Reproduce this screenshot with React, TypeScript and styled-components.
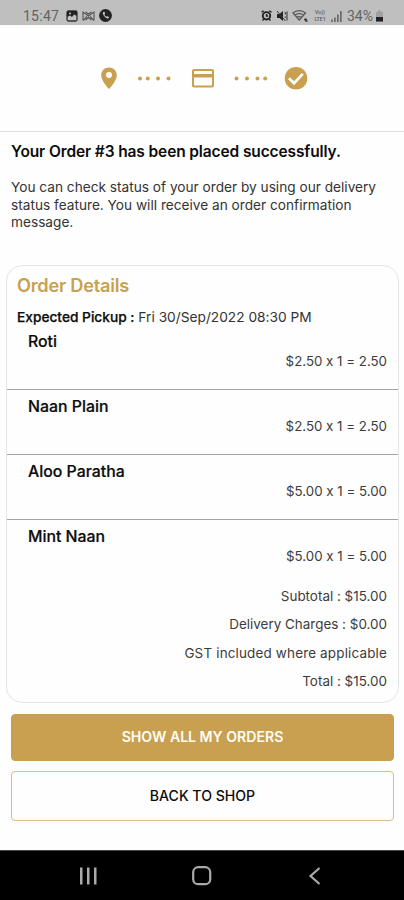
import React from 'react';
import styled, { createGlobalStyle } from 'styled-components';

const GOLD = '#c9a050';

const GlobalStyle = createGlobalStyle`
  * { box-sizing: border-box; }
  body { margin: 0; background: #fefefe; }
  button { font-family: inherit; }
`;

const Screen = styled.div`
  width: 404px;
  height: 900px;
  display: flex;
  flex-direction: column;
  overflow: hidden;
  background: #fefefe;
  color: #0c0c0c;
  font-family: Inter, "Liberation Sans", sans-serif;
  font-feature-settings: "calt" 0;
`;

const StatusBar = styled.header`
  height: 25px;
  flex: none;
  display: flex;
  align-items: center;
  justify-content: space-between;
  padding: 6px 20px 0 23px;
  background: #bfbfbf;
  color: #636363;
  font: 400 14px/18px Roboto, sans-serif;
`;

const StatusGroup = styled.div`
  display: flex;
  align-items: center;
  gap: 4px;
`;

const Clock = styled.span`
  margin-right: 3px;
  letter-spacing: 0.25px;
`;

const Percent = styled.span`
  margin: 0 -2px 0 1px;
`;

const Steps = styled.nav`
  height: 107px;
  flex: none;
  display: flex;
  align-items: flex-start;
  padding: 41px 0 0 101px;
  border-bottom: 1.5px solid #dfdfdf;

  svg { flex: none; display: block; }
`;

const StepLink = styled.span<{ $before: number; $after: number }>`
  display: flex;
  margin: 0 ${(p) => p.$after}px 0 ${(p) => p.$before}px;
`;

const Message = styled.section`
  height: 133px;
  flex: none;
  padding: 10px 11px 0;
`;

const Title = styled.h1`
  margin: 0 0 17px;
  font-size: 15.5px;
  line-height: 20px;
  font-weight: 600;
  letter-spacing: -0.12px;
  white-space: nowrap;
`;

const Copy = styled.p`
  margin: 0;
  color: #333;
  font-size: 13.66px;
  line-height: 17.7px;
`;

const Card = styled.section`
  height: 438px;
  flex: none;
  margin: 0 5px 0 6px;
  border: 1px solid #e6e6e6;
  border-radius: 16px;
  padding-top: 8px;
`;

const CardTitle = styled.h2`
  margin: 0 10px 11px;
  color: ${GOLD};
  font-size: 18.2px;
  line-height: 22px;
  font-weight: 600;
  letter-spacing: -0.24px;
`;

const Pickup = styled.p`
  margin: 0 10px 4px;
  height: 20px;
  color: #333;
  font-size: 13.73px;
  line-height: 20px;
  white-space: pre;
`;

const PickupLabel = styled.strong`
  color: #0c0c0c;
  font-weight: 500;
  -webkit-text-stroke: 0.25px #0c0c0c;
`;

const Item = styled.article<{ $last?: boolean }>`
  height: ${(p) => (p.$last ? 51 : 65)}px;
  padding: 7px 11px 0 21px;
  border-bottom: ${(p) => (p.$last ? 'none' : '1px solid #a4a4a4')};

  &:first-of-type {
    height: 59px;
    padding-top: 1px;
  }
`;

const ItemName = styled.h3`
  margin: 0;
  font-size: 15.85px;
  line-height: 20px;
  font-weight: 500;
  -webkit-text-stroke: 0.2px #0c0c0c;
`;

const ItemPrice = styled.p`
  margin: -1px 0 0;
  color: #3c3c3c;
  font-size: 13.3px;
  line-height: 20px;
  text-align: right;
`;

const Totals = styled.div`
  padding: 10.5px 11px 0;
  color: #3c3c3c;
  font-size: 13.45px;
  line-height: 28.5px;
  text-align: right;
`;

const TotalLine = styled.div<{ $wide?: boolean }>`
  letter-spacing: ${(p) => (p.$wide ? 0.17 : 0)}px;
`;

const Actions = styled.div`
  flex: 1;
  display: flex;
  flex-direction: column;
  gap: 10px;
  padding: 11px 10px 0 11px;
`;

const Action = styled.button<{ $filled?: boolean }>`
  width: 100%;
  height: ${(p) => (p.$filled ? 47 : 50)}px;
  padding: 0 0 2px;
  border: 1px solid ${(p) => (p.$filled ? GOLD : '#d9bd80')};
  border-radius: 4px;
  background: ${(p) => (p.$filled ? GOLD : '#fefefe')};
  color: ${(p) => (p.$filled ? '#fffdf5' : '#0c0c0c')};
  font-size: 14.1px;
  font-weight: ${(p) => (p.$filled ? 600 : 500)};
`;

const SystemNav = styled.footer`
  height: 50px;
  flex: none;
  display: grid;
  grid-template-columns: repeat(3, 113px);
  justify-content: center;
  justify-items: center;
  align-items: center;
  background: #000;
  border-top: 1px solid #444;
`;

const Dots = ({ xs }: { xs: number[] }) => (
  <svg width="36" height="24" viewBox="0 0 36 24" fill={GOLD}>
    {xs.map((x) => (
      <circle key={x} cx={x} cy="12.6" r="2" />
    ))}
  </svg>
);

const PinIcon = () => (
  <svg width="16" height="24" viewBox="0 0 16 24" fill={GOLD}>
    <path fillRule="evenodd" d="M8 1.5C3.6 1.5.2 4.9.2 9.2.2 15 8 23 8 23s7.8-8 7.8-13.8C15.8 4.9 12.4 1.5 8 1.5zM8 6a3 3 0 1 1 0 6 3 3 0 0 1 0-6z" />
  </svg>
);

const CardIcon = () => (
  <svg width="24" height="24" viewBox="0 0 24 24" fill={GOLD}>
    <path fillRule="evenodd" d="M3 3h18q2 0 2 2v14.5q0 2-2 2H3q-2 0-2-2V5q0-2 2-2zm0 2v3h18V5zm0 6.5v8h18v-8z" />
  </svg>
);

const CheckIcon = () => (
  <svg width="24" height="24" viewBox="0 0 24 24">
    <circle cx="12" cy="12.2" r="11.3" fill={GOLD} />
    <path d="M5 12.3l5 4.9 8.800-9.400" fill="none" stroke="#fefefe" strokeWidth="2.7" />
  </svg>
);

const PictureIcon = () => (
  <svg width="12" height="12" viewBox="0 0 12 12">
    <rect x="1" y="1" width="10" height="10" rx="1.5" fill="none" stroke="#333" strokeWidth="1.3" />
    <path d="M1 1h10v5L8 4.5 6 7 4 5.500 1 7z" fill="#222" />
    <circle cx="4" cy="3.6" r="1" fill="#bfbfbf" />
  </svg>
);

const MailIcon = () => (
  <svg width="13" height="12" viewBox="0 0 13 12" fill="none" stroke="#555" strokeWidth="1.1">
    <path d="M1 10.500V2l5.500 4L12 2v8.500M1 10.500l4-4M12 10.500l-4-4M3.500 10l3-2.500 3 2.500M3.500 2l3 2 3-2" />
  </svg>
);

const CallIcon = () => (
  <svg width="13" height="13" viewBox="0 0 13 13">
    <circle cx="6.5" cy="6.5" r="6.4" fill="#222" />
    <path d="M4 3.200c-1 1.700 2.800 6.800 5.300 6.200l.8-1.200-1.900-1.300-.9.800C6.300 7.200 5.600 6.200 5.400 5.400l.8-.8-.9-1.900z" fill="#c8c8c8" />
  </svg>
);

const AlarmIcon = () => (
  <svg width="11" height="11" viewBox="0 0 11 11" fill="none" stroke="#222">
    <circle cx="5.5" cy="5.8" r="3.7" strokeWidth="1.9" />
    <path d="M.5 2.300L2.700.7M8.300.7l2.200 1.600M1.500 10.500l1.300-1.300M9.500 10.500L8.200 9.200M5.500 4v2h1.600" strokeWidth="1.4" />
  </svg>
);

const MuteIcon = () => (
  <svg width="12" height="12" viewBox="0 0 12 12">
    <path d="M1 4h2.500L7 1v10L3.500 8H1z" fill="#222" />
    <path d="M1 1l8.500 10M9.300 2v2.500M9.300 6.500V8M11 1.500v9" fill="none" stroke="#333" />
  </svg>
);

const WifiIcon = () => (
  <svg width="17" height="13" viewBox="0 0 17 13" fill="none" stroke="#555" strokeWidth="1.2">
    <path d="M1 4c3.500-3.200 9-3.200 12.500 0L7.300 11zM3 6.200c2.400-2 6.200-2 8.600 0M5 8.500c1.400-1 3.200-1 4.600 0" />
    <path d="M12 10.500h2M13.500 12h2M14 9.500v3" strokeWidth="1.5" stroke="#333" />
  </svg>
);

const VolteLabel = styled.span`
  display: flex;
  flex-direction: column;
  width: 14px;
  color: #5c5c5c;
  font: 500 5.2px/6.5px Roboto, sans-serif;
  text-align: center;
`;

const SignalIcon = () => (
  <svg width="11" height="12" viewBox="0 0 11 12" fill="#6a6a6a">
    <path d="M0 9.500h1.700V12H0zM3 7.500h1.700V12H3zM6 4.500h1.700V12H6zM9 1h1.700v11H9z" />
  </svg>
);

const BatteryIcon = () => (
  <svg width="9" height="12" viewBox="0 0 9 12">
    <path d="M3 .5h3V2h2v9.500H1V2h2z" fill="#a0a0a0" />
    <path d="M1 7h7v4.500H1z" fill="#222" />
  </svg>
);

const items = [
  { name: 'Roti', price: '$2.50 x 1 = 2.50' },
  { name: 'Naan Plain', price: '$2.50 x 1 = 2.50' },
  { name: 'Aloo Paratha', price: '$5.00 x 1 = 5.00' },
  { name: 'Mint Naan', price: '$5.00 x 1 = 5.00' },
];

export default function App() {
  return (
    <Screen>
      <GlobalStyle />
      <StatusBar>
        <StatusGroup>
          <Clock>15:47</Clock>
          <PictureIcon />
          <MailIcon />
          <CallIcon />
        </StatusGroup>
        <StatusGroup>
          <AlarmIcon />
          <MuteIcon />
          <WifiIcon />
          <VolteLabel>
            <span>Vo))</span>
            <span>LTE1</span>
          </VolteLabel>
          <SignalIcon />
          <Percent>34%</Percent>
          <BatteryIcon />
        </StatusGroup>
      </StatusBar>
      <Steps>
        <PinIcon />
        <StepLink $before={18.5} $after={19}>
          <Dots xs={[4, 11.7, 22, 32.5]} />
        </StepLink>
        <CardIcon />
        <StepLink $before={18.5} $after={15}>
          <Dots xs={[3.5, 14, 24.5, 32.2]} />
        </StepLink>
        <CheckIcon />
      </Steps>
      <Message>
        <Title>Your Order #3 has been placed successfully.</Title>
        <Copy>
          You can check status of your order by using our delivery
          <br />
          status feature. You will receive an order confirmation
          <br />
          message.
        </Copy>
      </Message>
      <Card>
        <CardTitle>Order Details</CardTitle>
        <Pickup>
          <PickupLabel>Expected Pickup :</PickupLabel> Fri 30/Sep/2022 08:30 PM
        </Pickup>
        {items.map((item, i) => (
          <Item key={item.name} $last={i === items.length - 1}>
            <ItemName>{item.name}</ItemName>
            <ItemPrice>{item.price}</ItemPrice>
          </Item>
        ))}
        <Totals>
          <TotalLine>Subtotal : $15.00</TotalLine>
          <TotalLine>Delivery Charges : $0.00</TotalLine>
          <TotalLine $wide>GST included where applicable</TotalLine>
          <TotalLine>Total : $15.00</TotalLine>
        </Totals>
      </Card>
      <Actions>
        <Action $filled>SHOW ALL MY ORDERS</Action>
        <Action>BACK TO SHOP</Action>
      </Actions>
      <SystemNav>
        <svg width="20" height="20" viewBox="0 0 20 20" fill="#aaa">
          <path d="M1 1.500h2.500v17H1zM8 1.500h2.500v17H8zM15 1.500h2.500v17H15z" />
        </svg>
        <svg width="20" height="20" viewBox="0 0 20 20" fill="none" stroke="#aaa" strokeWidth="2.2">
          <rect x="1.2" y="1.2" width="17" height="17" rx="5" />
        </svg>
        <svg width="20" height="20" viewBox="0 0 20 20" fill="none" stroke="#aaa" strokeWidth="2.2">
          <path d="M14.500 2L5.500 10l9 8" />
        </svg>
      </SystemNav>
    </Screen>
  );
}
